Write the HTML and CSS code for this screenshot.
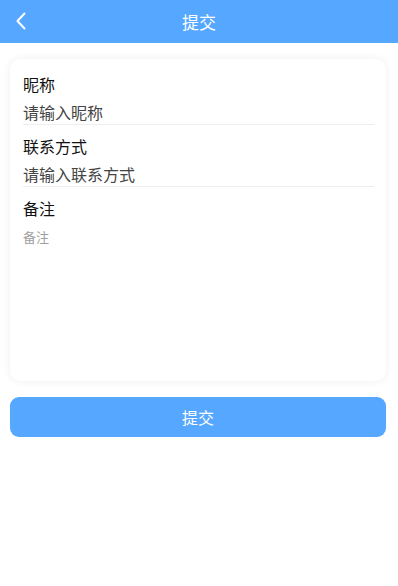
FILE: index.html
```html
<!DOCTYPE html>
<html lang="zh">
<head>
<meta charset="utf-8">
<title>提交</title>
<link rel="stylesheet" href="styles.css">
</head>
<body>
<header class="nav">
  <span class="back">
    <svg width="12" height="18" viewBox="0 0 12 18"><path d="M9.5 1.5 L2.5 9 L9.5 16.5" fill="none" stroke="#fff" stroke-width="2" stroke-linecap="round" stroke-linejoin="round"/></svg>
  </span>
  <h1 class="title">提交</h1>
</header>
<main class="page">
  <section class="card">
    <div class="field">
      <div class="label">昵称</div>
      <div class="input">请输入昵称</div>
    </div>
    <div class="field">
      <div class="label">联系方式</div>
      <div class="input">请输入联系方式</div>
    </div>
    <div class="field">
      <div class="label">备注</div>
      <div class="textarea">备注</div>
    </div>
  </section>
  <button class="submit">提交</button>
</main>
</body>
</html>
```

FILE: styles.css
```css
* { box-sizing: border-box; }
html, body { margin: 0; padding: 0; background: #fff; }
body { font-family: "Noto Sans CJK SC", "Noto Sans", sans-serif; color: #222; }

.nav {
  height: 43px;
  background: #55a7ff;
  display: flex;
  align-items: center;
  justify-content: center;
  position: relative;
}
.back {
  position: absolute;
  left: 15px;
  top: 12px;
  display: flex;
}
.title {
  margin: 0;
  font-size: 17px;
  font-weight: 400;
  color: #fff;
  line-height: 43px;
}

.page { padding: 16px 12px 0 10px; }

.card {
  background: #fff;
  border-radius: 10px;
  box-shadow: 0 0 8px rgba(0, 0, 0, 0.07);
  padding: 13px 12px 0 13px;
  height: 322px;
}
.field { margin-bottom: 9px; }
.label {
  font-size: 16px;
  line-height: 24px;
  color: #111;
}
.input {
  margin-top: 4px;
  font-size: 16px;
  line-height: 24px;
  color: #444;
  border-bottom: 1px solid #eee;
}
.textarea {
  margin-top: 5px;
  font-size: 13px;
  line-height: 24px;
  color: #a0a0a0;
}

.submit {
  display: block;
  width: 100%;
  margin-top: 16px;
  height: 40px;
  border: none;
  border-radius: 9px;
  background: #55a7ff;
  color: #fff;
  font-family: inherit;
  font-size: 16px;
}
```
